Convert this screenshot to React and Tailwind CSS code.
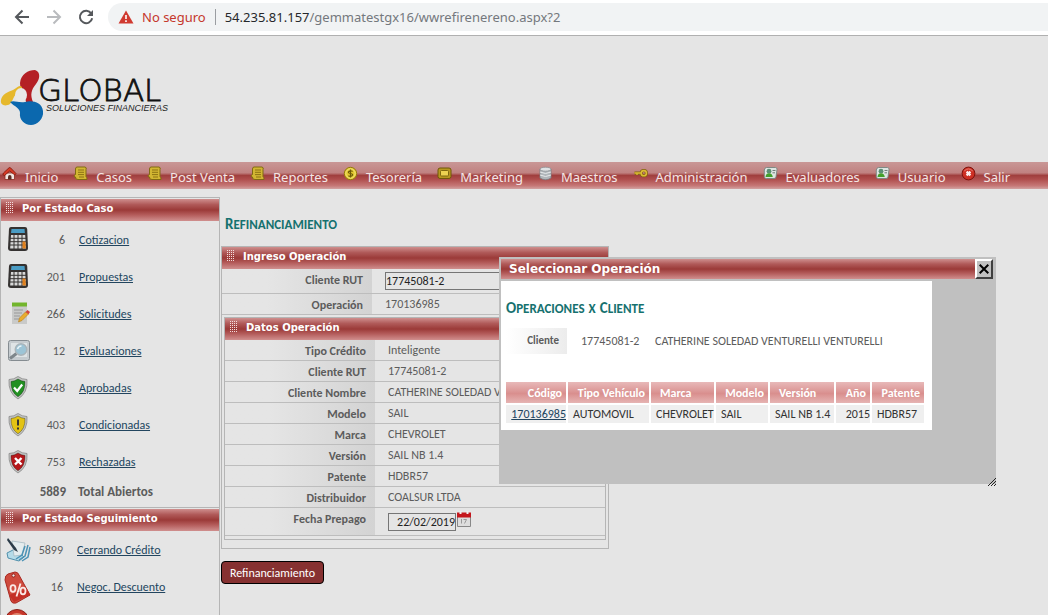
import React from "react";

const bar =
  "bg-[linear-gradient(to_bottom,#cf8f8e_0%,#b05a59_25%,#9b3a38_50%,#b45c5b_72%,#d08f8e_100%)]";

/* ---------- logo ---------- */

function Logo() {
  return (
    <svg width="180" height="60" viewBox="0 0 180 60" role="img" aria-label="Global Soluciones Financieras">
      <path d="M20 15C21 6 28 2 35 2C41 4 40 11 36 16C31 22 30 27 33 34L27 36C24 31 27 25 21 20Q20 18 20 15Z" fill="#b42025" />
      <path d="M1 32C2 26 8 24 13 22C17 20 19 16 22 19C23 24 19 24 16 26C13 29 13 33 10 36C5 39 0 37 1 32Z" fill="#e6b82c" />
      <path d="M10 34C14 32 18 35 25 34C32 32 42 34 43 43C44 51 37 57 31 57C24 57 19 51 20 45C20 40 15 39 10 34Z" fill="#0b68ae" />
      <ellipse cx="21" cy="27" rx="6" ry="7" fill="#e8e8e8" />
      <text x="38" y="33" fill="#111" stroke="#111" strokeWidth=".8" fontFamily="'DejaVu Sans', sans-serif" fontWeight="200" fontSize="31">
        GLOBAL
      </text>
      <text x="46" y="43" fill="#222" fontFamily="'Liberation Sans', sans-serif" fontStyle="italic" fontSize="9">
        SOLUCIONES FINANCIERAS
      </text>
    </svg>
  );
}

/* ---------- menu icons, 15px ---------- */

const menuIcons = {
  home: (
    <>
      <path d="M3 7h9.500v6.500H3z" fill="#f1e6e2" stroke="#8a2a20" strokeWidth=".8" />
      <path d="M.8 8.500Q1 7 3 5.500L7 1.800Q7.800 1.200 8.500 1.800L14 7.500L12.800 9L7.800 5L2.500 9.500Z" fill="#d63a26" stroke="#7d160c" strokeWidth=".8" />
      <path d="M6 13.500V11q0-2 1.800-2T9.500 11v2.500Z" fill="#5b2b22" />
    </>
  ),
  note: (
    <>
      <path d="M4 1h8q2 .5 1 2.500v7q1.300 1 1 3H5Q2 13.500 2.500 11L1 10.500Q1 9 2.500 8.500V3Q2.500 1.200 4 1Z" fill="#d2b632" stroke="#806a12" />
      <path d="M5 4h6M5 6.300h6M5 8.600h6M6 11h5" stroke="#8d7314" />
    </>
  ),
  coin: (
    <>
      <circle cx="7.500" cy="7.500" r="6.200" fill="#e3c930" stroke="#947a0c" />
      <circle cx="7.500" cy="7.500" r="4.700" fill="none" stroke="#f3e47c" />
      <path d="M9.600 5.500Q7.500 4 5.900 5.500T7.500 7.500T9.100 9.600T5.400 9.800M7.500 3.500v8" fill="none" stroke="#6d5a08" strokeWidth="1.200" />
    </>
  ),
  screen: (
    <>
      <rect x="1" y="2" width="13" height="10.500" rx="2" fill="#b79720" stroke="#6f5909" />
      <rect x="3.500" y="4.500" width="8" height="5.500" rx="1" fill="#ecd252" stroke="#7f680e" />
    </>
  ),
  db: (
    <>
      <path d="M2 3v9q5.500 3.500 11 0V3Z" fill="#b0b6ba" stroke="#7b7f83" strokeWidth=".8" />
      <ellipse cx="7.500" cy="3.200" rx="5.500" ry="2" fill="#dfe3e5" stroke="#8b9094" strokeWidth=".8" />
      <path d="M2 6q5.500 3 11 0M2 9q5.500 3 11 0" fill="none" stroke="#e6e9ea" />
    </>
  ),
  key: (
    <g fill="none" stroke="#80640b">
      <path d="M8 7H1.500M4 7v2" strokeWidth="3" />
      <circle cx="10.800" cy="7.200" r="2.600" strokeWidth="3" />
      <g stroke="#dcba36">
        <path d="M8.500 7H1.500M4 7v2" strokeWidth="1.400" />
        <circle cx="10.800" cy="7.200" r="2.600" strokeWidth="1.600" />
      </g>
    </g>
  ),
  card: (
    <>
      <path d="M3.500 1.500h9q1.800.2 1.500 2l-1 7.500q-.2 1.500-2 1.500H3.500Q1.500 12.500 1.300 11V4Q1.500 1.800 3.500 1.500Z" fill="#dde5e2" stroke="#77857f" strokeWidth=".9" />
      <circle cx="6" cy="5.200" r="2.400" fill="#5a8f74" />
      <path d="M2.500 11q.2-3.800 3.500-3.800T9.800 11Z" fill="#43a12b" />
      <path d="M9.500 4.500h3M9.500 6.800h2.500" stroke="#6e7c7a" />
    </>
  ),
  exit: (
    <>
      <circle cx="7.500" cy="7.500" r="6.400" fill="#cd2f24" stroke="#7d110b" />
      <path d="M3.200 5Q7.500.8 11.800 5" fill="none" stroke="#ea7d72" />
      <path d="M5.600 5.600l3.800 3.800M9.400 5.600L5.600 9.400" stroke="#fbeeee" strokeWidth="2.200" />
    </>
  ),
};

const menu = [
  ["home", "Inicio"],
  ["note", "Casos"],
  ["note", "Post Venta"],
  ["note", "Reportes"],
  ["coin", "Tesorería"],
  ["screen", "Marketing"],
  ["db", "Maestros"],
  ["key", "Administración"],
  ["card", "Evaluadores"],
  ["card", "Usuario"],
  ["exit", "Salir"],
];

/* ---------- sidebar icons, 26px ---------- */

function Shield({ fill, children }) {
  return (
    <>
      <path d="M14 1.500Q18 4.500 23 4.500Q24 18 14 24Q4 18 5 4.500Q10 4.500 14 1.500Z" fill="#c3c5c3" stroke="#888" strokeWidth=".8" />
      <path d="M14 4Q17.500 6.300 21 6.500Q21.500 17 14 21.800Q6.500 17 7 6.500Q10.500 6.300 14 4Z" fill={fill} stroke="#0006" strokeWidth=".8" />
      {children}
    </>
  );
}

const caseIcons = {
  calc: (
    <>
      <path d="M7 0h14q2 0 2.200 2L24 21q0 3-3 3H7q-3 0-3-3L5 2q.2-2 2-2Z" fill="#353231" />
      <path d="M7.500 2h13l.4 4H7Z" fill="#4a9cc4" />
      <path d="M7 8h14.200l.8 13.500H6.200Z" fill="#d8d8d8" />
      <path d="M6 11.300h16M6 14.700h16M6 18h16M10 8v14M14 8v14M18 8v14" stroke="#353231" />
      <path d="M18.500 14.500h3l.4 7h-3.400Z" fill="#e0801c" />
    </>
  ),
  form: (
    <>
      <path d="M8 2h15v21H8Z" fill="#c9cac9" />
      <path d="M8 1.500h15v4H8Z" fill="#72b52c" />
      <path d="M10 9h9M10 12h8M10 15h6M10 18h5" stroke="#999" />
      <path d="M21.500 11l3 2-6.500 6.500-3.500 1.500 1-4Z" fill="#e9ad2e" stroke="#b77a16" strokeWidth=".6" />
      <path d="M21.500 11l2-2 2.500 2-1.500 2.300Z" fill="#d3463c" />
    </>
  ),
  search: (
    <>
      <rect x="4.500" y="2.500" width="21" height="20" rx="2" fill="#c5cbcf" stroke="#858c91" />
      <path d="M7 5h16v14H7Z" fill="#dfe4e6" />
      <path d="M12.500 15.500l-6.500 5" stroke="#7e868b" strokeWidth="3" />
      <circle cx="17" cy="11.500" r="5.800" fill="#9cc4d6" stroke="#aab4b9" strokeWidth="1.400" />
      <path d="M13.500 11q1-3 4-3" fill="none" stroke="#e9f5fa" strokeWidth="1.500" />
    </>
  ),
  ok: (
    <Shield fill="#229022">
      <path d="M10 12.500l3.200 3.500 5-6.500" fill="none" stroke="#fff" strokeWidth="2.200" />
    </Shield>
  ),
  warn: (
    <Shield fill="#e3c314">
      <path d="M14 7.500v6M14 15.500v2" stroke="#333" strokeWidth="2" />
    </Shield>
  ),
  no: (
    <Shield fill="#b5181b">
      <path d="M11 9l6.500 6.500M17.500 9L11 15.500" stroke="#fff" strokeWidth="2.400" />
    </Shield>
  ),
  sign: (
    <>
      <path d="M3 16l8-4 9 8-5 4-11-3Z" fill="#b5dbe8" stroke="#5190ac" />
      <path d="M8 4l13 2-3 12-8 1Z" fill="#e4ecee" stroke="#9fb5bd" strokeWidth=".7" />
      <path d="M15 23l6-4 3-11M18 24l6-4 2-10M12 22l6-4 3-9" fill="none" stroke="#4c93b5" strokeWidth="1.500" />
      <path d="M4 1l8 10 2 4-4-2L3 3Z" fill="#2c3c49" />
    </>
  ),
  tag: (
    <>
      <path d="M4 0l7-2q3 0 4 3l11 20-14 8Q8 30 7 27L1 6Q1 1 4 0Z" fill="#cf4a3d" stroke="#a92a22" />
      <path d="M10 28L26 21L23 15L5 21Z" fill="#c42f26" />
      <circle cx="9.500" cy="1.500" r="1.600" fill="#eee" stroke="#8d231c" />
      <g fill="none" stroke="#fbe9e6" strokeWidth="1.800">
        <ellipse cx="9" cy="14.500" rx="2.500" ry="3.300" />
        <ellipse cx="19" cy="17" rx="2.500" ry="3.300" />
        <path d="M16.500 9.500l-4 13" />
      </g>
    </>
  ),
  face: (
    <>
      <circle cx="13" cy="10.500" r="12" fill="#c7372b" stroke="#8a1f17" />
      <path d="M4 7q9-10 18 0l-3 5H7Z" fill="#e08a72" />
      <path d="M6 7q3-3 7 0 4-3 8 0" fill="none" stroke="#b33a2c" />
    </>
  ),
};

const estadoCaso = [
  ["calc", "6", "Cotizacion"],
  ["calc", "201", "Propuestas"],
  ["form", "266", "Solicitudes"],
  ["search", "12", "Evaluaciones"],
  ["ok", "4248", "Aprobadas"],
  ["warn", "403", "Condicionadas"],
  ["no", "753", "Rechazadas"],
];

const estadoSeguimiento = [
  ["sign", "5899", "Cerrando Crédito"],
  ["tag", "16", "Negoc. Descuento"],
  ["face", "", ""],
];

function BarTitle({ children }) {
  return (
    <h2 className={`${bar} flex h-[22px] items-center gap-2 pb-[2px] pl-1 font-['DejaVu_Sans',Verdana,sans-serif] text-[10px] font-bold text-white`}>
      <svg width="9" height="14" viewBox="0 0 9 14" aria-hidden="true" className="mb-[2px] shrink-0">
        {[0, 2, 4, 6, 8, 10].map((y) => (
          <path key={y} d={`M1 ${y + 1.5}h8`} stroke="#f4dcdc" strokeDasharray="1 1" />
        ))}
      </svg>
      <span>{children}</span>
    </h2>
  );
}

function PageTitle({ words, className }) {
  return (
    <h1 className={`${className} flex items-baseline gap-1 text-[13px] leading-5 font-bold text-[#16716f] uppercase`}>
      {words.map((word) => (
        <span key={word} className={word.length > 1 ? "inline-block first-letter:text-[15px]" : ""}>
          {word}
        </span>
      ))}
    </h1>
  );
}

function CaseList({ items, countWidth }) {
  return (
    <ul>
      {items.map(([icon, count, name]) => (
        <li key={icon + name} className="flex h-[37px] items-center pt-px">
          <svg width="26" height="26" viewBox="0 0 26 26" aria-hidden="true" className="ml-[3px] shrink-0 overflow-visible">
            {caseIcons[icon]}
          </svg>
          <span className={`${countWidth} text-right`}>{count}</span>
          {name && (
            <a href="#" className="ml-[14px] text-[#22455f] underline">
              {name}
            </a>
          )}
        </li>
      ))}
    </ul>
  );
}

function Field({ label, htmlFor, children, height = "h-[21px]" }) {
  const Tag = htmlFor ? "label" : "span";
  return (
    <div className={`${height} flex border-b border-[#bdbdbd]`}>
      <Tag
        htmlFor={htmlFor}
        className="w-[150px] shrink-0 bg-linear-to-r from-[#e5e5e5] from-30% to-[#d3d3d3] pt-1 pr-[9px] text-right leading-[14px] font-bold"
      >
        {label}
      </Tag>
      <div className="flex items-start pt-[3px] pl-[13px] leading-[14px] whitespace-nowrap">{children}</div>
    </div>
  );
}

const datos = [
  ["Tipo Crédito", "Inteligente"],
  ["Cliente RUT", "17745081-2"],
  ["Cliente Nombre", "CATHERINE SOLEDAD V"],
  ["Modelo", "SAIL"],
  ["Marca", "CHEVROLET"],
  ["Versión", "SAIL NB 1.4"],
  ["Patente", "HDBR57"],
  ["Distribuidor", "COALSUR LTDA"],
];

const columns = [
  ["Código", "w-[60px]", "text-right pr-1"],
  ["Tipo Vehículo", "w-[81px]", "text-right pr-1"],
  ["Marca", "w-[63px]", "text-left pl-[9px]"],
  ["Modelo", "w-[52px]", "text-right pr-1"],
  ["Versión", "w-[64px]", "text-left pl-[9px]"],
  ["Año", "w-[34px]", "text-right pr-1"],
  ["Patente", "w-[52px]", "text-right pr-1"],
];

function BrowserBar() {
  return (
    <header className="flex h-9 shrink-0 items-center border-b border-[#b0b0b0] bg-white pb-[2px]">
      <div className="flex items-center gap-3 pl-3">
        <button aria-label="Atrás" className="p-[2px]">
          <svg width="16" height="16" viewBox="0 0 16 16" fill="none" stroke="#55585c" strokeWidth="2">
            <path d="M15 8H2M8.500 1.500L2 8l6.500 6.500" />
          </svg>
        </button>
        <button aria-label="Adelante" className="p-[2px]">
          <svg width="16" height="16" viewBox="0 0 16 16" fill="none" stroke="#b9bbbe" strokeWidth="2">
            <path d="M1 8H14M7.500 1.500L14 8l-6.500 6.500" />
          </svg>
        </button>
        <button aria-label="Recargar" className="p-[2px]">
          <svg width="16" height="16" viewBox="0 0 16 16" fill="none" stroke="#55585c" strokeWidth="2">
            <path d="M13.300 4.500A6.200 6.200 0 1 0 14.200 9.300" />
            <path d="M15 1v6H9Z" fill="#55585c" stroke="none" />
          </svg>
        </button>
      </div>
      <div className="ml-3 flex h-7 flex-1 items-center rounded-l-full bg-[#f1f3f4] pl-[10px] font-['Noto_Sans','Segoe_UI',sans-serif] text-[13px]">
        <svg width="16" height="14" viewBox="0 0 16 14" aria-hidden="true">
          <path d="M8 .5L15.500 13.500H.5Z" fill="#d03a30" />
          <path d="M8 5v4M8 10.300v1.700" stroke="#fff" strokeWidth="1.600" />
        </svg>
        <span className="ml-2 text-[#c5372c]">No seguro</span>
        <span className="mx-[9px] h-4 w-px bg-[#9a9da1]" />
        <span className="text-[#26282b]">54.235.81.157</span>
        <span className="text-[#74787d]">/gemmatestgx16/wwrefirenereno.aspx?2</span>
      </div>
    </header>
  );
}

function OperationDialog() {
  return (
    <section
      role="dialog"
      aria-label="Seleccionar Operación"
      className="absolute top-[257px] left-[499px] h-[227px] w-[497px] bg-[#c0c0c0] p-[2px]"
    >
      <div className="flex h-5 items-stretch pr-px">
        <h2 className={`${bar} flex flex-1 items-center pl-2 font-['DejaVu_Sans',Verdana,sans-serif] text-[12px] font-bold text-white`}>
          Seleccionar Operación
        </h2>
        <button
          aria-label="Cerrar"
          className="flex w-[18px] items-center justify-center border-2 border-t-white border-r-[#404040] border-b-[#404040] border-l-white bg-[#c0c0c0]"
        >
          <svg width="10" height="10" viewBox="0 0 10 10" stroke="#000" strokeWidth="2">
            <path d="M.7.7l8.600 8.600M9.300.7L.7 9.300" />
          </svg>
        </button>
      </div>
      <div className="mt-[2px] h-[149px] w-[431px] bg-white px-[5px] pt-[17px]">
        <PageTitle words={["Operaciones", "x", "Cliente"]} className="" />
        <div className="mt-[9px] flex h-[26px] items-center">
          <span className="flex h-full w-[61px] items-center justify-end bg-linear-to-r from-white to-[#ececec] pr-2 text-[11px] font-bold">
            Cliente
          </span>
          <span className="ml-[14px] w-[74px]">17745081-2</span>
          <span>CATHERINE SOLEDAD VENTURELLI VENTURELLI</span>
        </div>
        <table className="mt-[26px] -ml-[2px] w-[422px] table-fixed border-separate border-spacing-[2px] whitespace-nowrap">
          <thead>
            <tr>
              {columns.map(([name, width, align]) => (
                <th
                  key={name}
                  className={`${width} ${align} h-[21px] bg-[linear-gradient(to_bottom,#e8b9b9,#d98f8e_55%,#e6b4b3)] p-0 leading-4 font-bold text-white`}
                >
                  {name}
                </th>
              ))}
            </tr>
          </thead>
          <tbody className="text-[#333]">
            <tr>
              <td className="h-[18px] bg-[#efefef] p-0 text-right leading-4">
                <a href="#" className="text-[#22455f] underline">
                  170136985
                </a>
              </td>
              <td className="bg-[#efefef] p-0 pl-[5px]">AUTOMOVIL</td>
              <td className="bg-[#efefef] p-0 pl-[5px]">CHEVROLET</td>
              <td className="bg-[#efefef] p-0 pl-[5px]">SAIL</td>
              <td className="bg-[#efefef] p-0 pl-[5px]">SAIL NB 1.4</td>
              <td className="bg-[#efefef] p-0 text-right">2015</td>
              <td className="bg-[#efefef] p-0 pl-[5px]">HDBR57</td>
            </tr>
          </tbody>
        </table>
      </div>
      <svg width="8" height="8" viewBox="0 0 8 8" aria-hidden="true" className="absolute right-0 -bottom-[2px]">
        <path d="M0 8L8 0M3 8l5-5M6 8l2-2" stroke="#222" />
      </svg>
    </section>
  );
}

export default function App() {
  return (
    <div className="relative flex h-screen flex-col overflow-hidden bg-[#e5e5e5] font-[Calibri,Carlito,Lato,sans-serif] text-[12px] leading-4 text-[#5c5c5c]">
      <BrowserBar />
      <div className="h-[126px] shrink-0 pt-8">
        <Logo />
      </div>
      <nav className="h-[27px] shrink-0 bg-[linear-gradient(to_bottom,#c99796_0%,#c08281_40%,#a03f3e_50%,#b04f4e_65%,#c67877_88%,#d2a3a2_100%)]">
        <ul className="flex gap-[15px] pl-[2px] font-['Noto_Sans',Tahoma,sans-serif] text-[13px] text-[#f3e6e6]">
          {menu.map(([icon, name]) => (
            <li key={name}>
              <a href="#" className="flex gap-2 whitespace-nowrap">
                <svg width="15" height="15" viewBox="0 0 15 15" aria-hidden="true" className="mt-1 shrink-0">
                  {menuIcons[icon]}
                </svg>
                <span className="pt-[5px] leading-5">{name}</span>
              </a>
            </li>
          ))}
        </ul>
      </nav>

      <div className="flex min-h-0 flex-1 items-start pt-2">
        <aside className="w-[220px] shrink-0 border-x border-t border-[#b5b5b5]">
          <div className="border-b border-[#b5b5b5] pt-px">
            <BarTitle>Por Estado Caso</BarTitle>
            <CaseList items={estadoCaso} countWidth="w-[35px]" />
            <p className="flex h-[27px] pt-1 text-[13px] leading-4 font-bold">
              <span className="w-[65px] text-right">5889</span>
              <span className="ml-3">Total Abiertos</span>
            </p>
          </div>
          <div className="pt-px">
            <BarTitle>Por Estado Seguimiento</BarTitle>
            <CaseList items={estadoSeguimiento} countWidth="w-[33px]" />
          </div>
        </aside>

        <main className="w-[389px] pl-px">
          <PageTitle words={["Refinanciamiento"]} className="mt-[17px] mb-[11px] pl-1" />
          <div className="border border-[#b5b5b5]">
            <BarTitle>Ingreso Operación</BarTitle>
            <Field label="Cliente RUT" htmlFor="rut" height="h-[25px]">
              <input
                id="rut"
                defaultValue="17745081-2"
                className="h-[18px] w-40 border border-[#767676] bg-transparent text-[#222]"
              />
            </Field>
            <Field label="Operación">170136985</Field>
            <div className="mx-[2px] mt-[2px] mb-2 border border-[#b5b5b5] pb-[3px]">
              <BarTitle>Datos Operación</BarTitle>
              {datos.map(([label, value]) => (
                <Field key={label} label={label}>
                  {value}
                </Field>
              ))}
              <Field label="Fecha Prepago" htmlFor="fecha" height="h-[28px]">
                <input
                  id="fecha"
                  defaultValue="22/02/2019"
                  className="mt-[2px] h-[18px] w-[68px] border border-[#767676] bg-transparent text-right text-[#222]"
                />
                <button aria-label="Abrir calendario" className="ml-px">
                  <svg width="14" height="16" viewBox="0 0 14 16">
                    <path d="M.5 3h13v12.500H.5Z" fill="#ddd" stroke="#888" />
                    <path d="M0 1.500h14v5H0Z" fill="#c4161c" />
                    <path d="M3.500 0v3M10.500 0v3" stroke="#eee" strokeWidth="2" />
                    <path d="M4.500 8v4.500M6.500 8.500h3l-2 4" fill="none" stroke="#999" />
                  </svg>
                </button>
              </Field>
            </div>
          </div>
          <button className="mt-3 h-[23px] w-[103px] rounded-[4px] border border-black bg-[#863131] text-white">Refinanciamiento</button>
        </main>
      </div>

      <OperationDialog />
    </div>
  );
}
